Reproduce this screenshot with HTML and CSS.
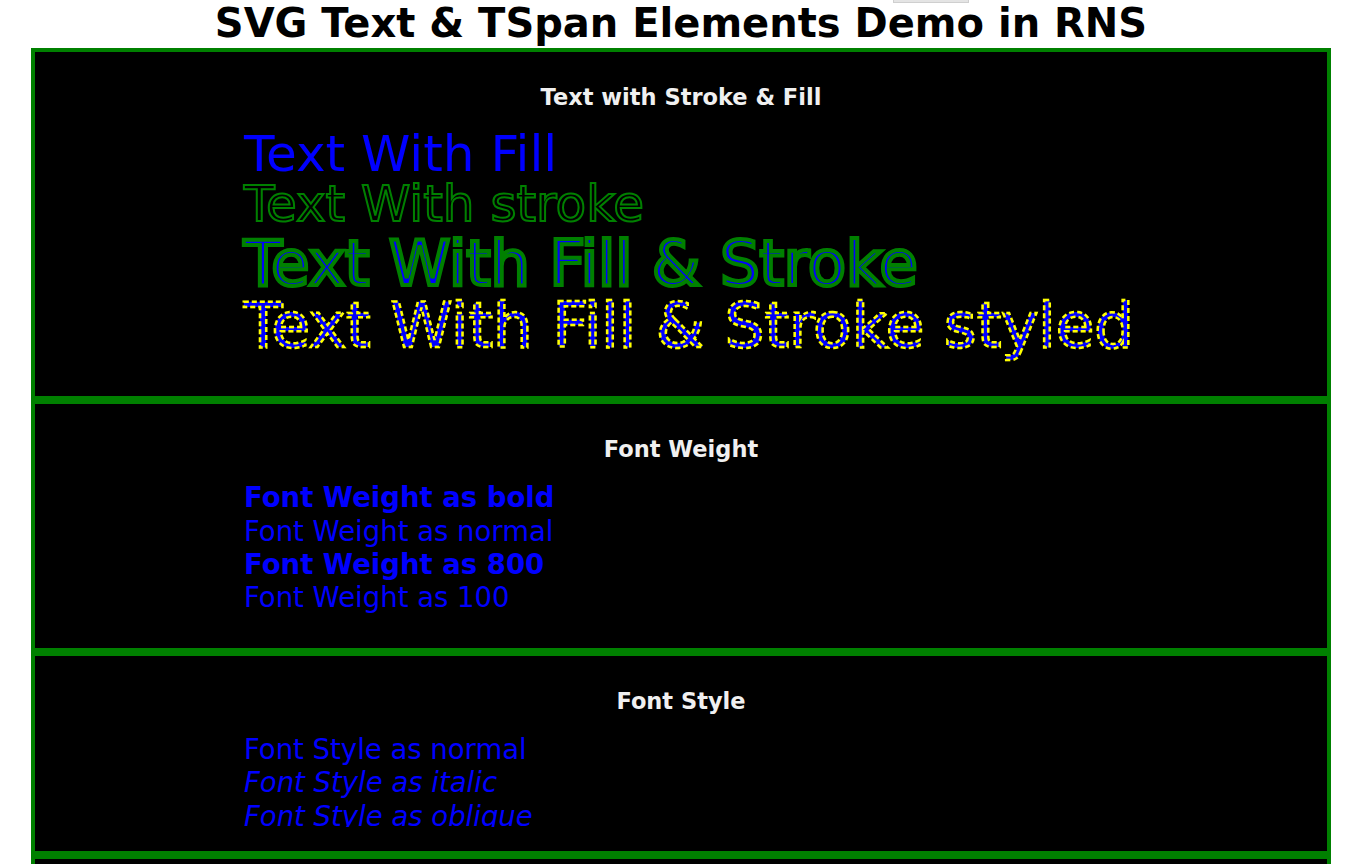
FILE: index.html
```html
<!DOCTYPE html>
<html>
<head>
<meta charset="utf-8">
<link rel="stylesheet" href="styles.css">
</head>
<body>
<div class="page">
  <div class="topbtn"></div>
  <h1 class="title">SVG Text &amp; TSpan Elements Demo in RNS</h1>
  <div class="list">
    <section class="card">
      <h2 class="card-title">Text with Stroke &amp; Fill</h2>
      <svg class="demo demo-1" width="100%" height="245">
        <text x="209" y="44" class="t50" fill="#0000ff">Text With Fill</text>
        <text x="209" y="94" class="t50" fill="none" stroke="#008000" stroke-width="2">Text With stroke</text>
        <text x="209" y="158" class="t62" fill="#0000ff" stroke="#008000" stroke-width="4">Text With Fill &amp; Stroke</text>
        <text x="209" y="220" class="t63" fill="#0000ff" stroke="#ffff00" stroke-width="2.5" stroke-dasharray="5,3">Text With Fill &amp; Stroke styled</text>
      </svg>
    </section>
    <section class="card">
      <h2 class="card-title">Font Weight</h2>
      <svg class="demo" width="100%" height="145">
        <text x="209" y="28" class="t27" fill="#0000ff" font-weight="bold">Font Weight as bold</text>
        <text x="209" y="62" class="t27" fill="#0000ff" font-weight="normal">Font Weight as normal</text>
        <text x="209" y="95" class="t27" fill="#0000ff" font-weight="800">Font Weight as 800</text>
        <text x="209" y="128" class="t27" fill="#0000ff" font-weight="normal">Font Weight as 100</text>
      </svg>
    </section>
    <section class="card">
      <h2 class="card-title">Font Style</h2>
      <svg class="demo" width="100%" height="96">
        <text x="209" y="28" class="t27" fill="#0000ff">Font Style as normal</text>
        <text x="209" y="61" class="t27" fill="#0000ff" font-style="italic">Font Style as italic</text>
        <text x="209" y="95" class="t27" fill="#0000ff" font-style="oblique">Font Style as oblique</text>
      </svg>
    </section>
    <section class="card">
      <h2 class="card-title">TSpan</h2>
      <svg class="demo" width="100%" height="120"></svg>
    </section>
  </div>
</div>
</body>
</html>
```
FILE: styles.css
```css
html, body {
  margin: 0;
  padding: 0;
  background: #ffffff;
}
body {
  font-family: "DejaVu Sans", sans-serif;
}
.page {
  margin: 0 17px 0 31px;
}
.topbtn {
  height: 3px;
  width: 76px;
  margin-left: 862px;
  background: #e4e4e4;
  box-sizing: border-box;
  border: 1px solid #cfcfcf;
  border-top: none;
}
.title {
  margin: 0;
  height: 45px;
  line-height: 41px;
  text-align: center;
  font-family: "DejaVu Sans", sans-serif;
  font-weight: bold;
  font-size: 40px;
  color: #000;
  overflow: visible;
}
.list {
  display: flex;
  flex-direction: column;
}
.card {
  border: 4px solid #008000;
  background: #000;
  padding: 33px 0 24px;
}
.card-title {
  margin: 0 0 18px;
  height: 24px;
  line-height: 24px;
  text-align: center;
  color: #f0f0f0;
  font-family: "DejaVu Sans", sans-serif;
  font-weight: bold;
  font-size: 22.5px;
}
.demo {
  display: block;
  overflow: hidden;
  font-family: "DejaVu Sans", sans-serif;
}
.t50 { font-size: 50px; }
.t62 { font-size: 62px; }
.t63 { font-size: 62.6px; }
.t27 { font-size: 27.5px; }
```
